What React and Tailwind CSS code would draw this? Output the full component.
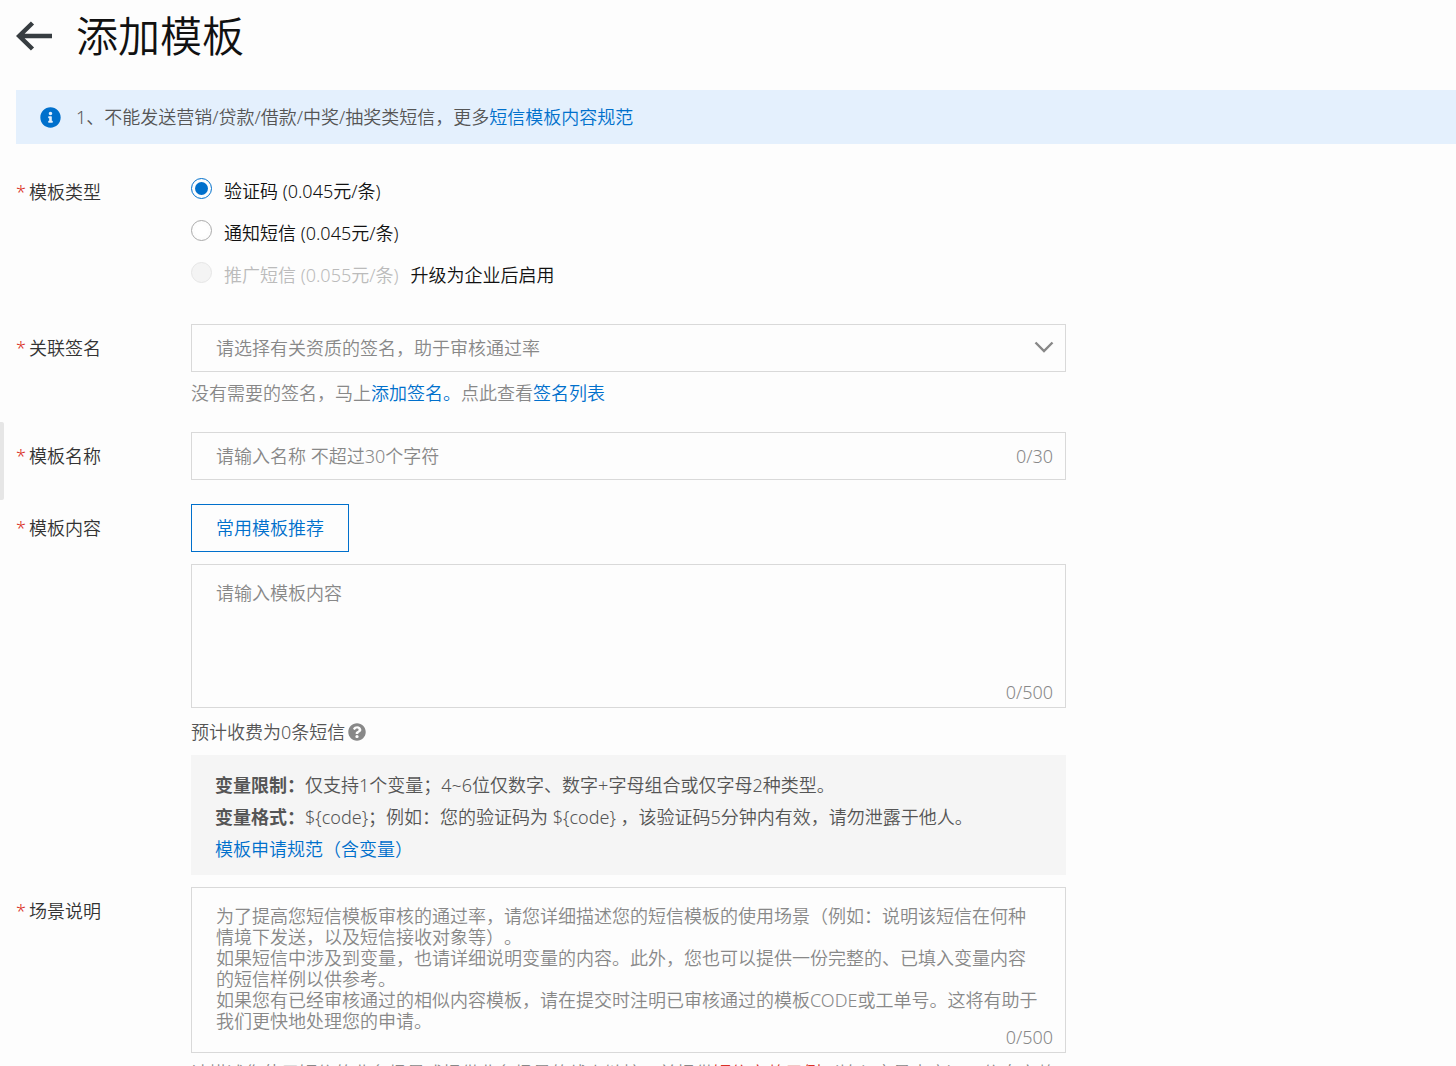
import { useState } from 'react'
import { FaInfoCircle, FaQuestionCircle } from 'react-icons/fa'

const PRICE_TYPES = [
  { value: 'code', label: '验证码 (0.045元/条)' },
  { value: 'notice', label: '通知短信 (0.045元/条)' },
  { value: 'promo', label: '推广短信 (0.055元/条)', disabled: true, note: '升级为企业后启用' },
]

const SCENE_PLACEHOLDER = [
  '为了提高您短信模板审核的通过率，请您详细描述您的短信模板的使用场景（例如：说明该短信在何种情境下发送，以及短信接收对象等）。',
  '如果短信中涉及到变量，也请详细说明变量的内容。此外，您也可以提供一份完整的、已填入变量内容的短信样例以供参考。',
  '如果您有已经审核通过的相似内容模板，请在提交时注明已审核通过的模板CODE或工单号。这将有助于我们更快地处理您的申请。',
].join('\n')

function FormRow({ label, htmlFor, id, children }) {
  const Label = htmlFor ? 'label' : 'div'
  return (
    <div className="grid grid-cols-6">
      <Label id={id} htmlFor={htmlFor} className="flex h-12 items-center gap-[3px] text-[#333]">
        <span className="text-[#d93026]">*</span>
        {label}
      </Label>
      <div className="col-span-5">{children}</div>
    </div>
  )
}

function TextLink({ children }) {
  return <a href="#" className="text-[#0070cc] hover:underline">{children}</a>
}

function CountedTextarea({ id, value, onChange, placeholder, max, className }) {
  return (
    <div className="relative border border-[#d9d9d9]">
      <textarea
        id={id}
        value={value}
        maxLength={max}
        placeholder={placeholder}
        onChange={(e) => onChange(e.target.value)}
        className={`block w-full resize-none overflow-hidden px-6 pt-[18px] leading-[21px] text-[#333] outline-none placeholder:text-[#888] ${className}`}
      />
      <span className="absolute right-3 bottom-[3px] text-[#888]">{value.length}/{max}</span>
    </div>
  )
}

export default function App() {
  const [type, setType] = useState('code')
  const [name, setName] = useState('')
  const [content, setContent] = useState('')
  const [scene, setScene] = useState('')

  return (
    <main className="relative min-h-screen bg-[#fdfdfd] pl-4 font-['Noto_Sans','Noto_Sans_CJK_SC',sans-serif] text-[18px] leading-6 font-[350] text-[#555] [text-spacing-trim:space-all]">
      <button
        type="button"
        aria-label="展开菜单"
        className="absolute top-[422px] left-0 h-[78px] w-1 rounded-r-xs bg-[#e6e6e6]"
      />

      <header className="flex h-[90px] items-start gap-6 pt-2">
        <button type="button" aria-label="返回" className="flex h-14 items-center">
          <svg width="36" height="30" viewBox="0 0 36 30" fill="none" stroke="#373d41" strokeWidth="4.5">
            <path d="M36 15H4M16.5 2 3.2 15l13.3 13" />
          </svg>
        </button>
        <h1 className="text-[42px] leading-14 font-[350] text-[#111]">添加模板</h1>
      </header>

      <div className="flex h-[54px] items-center gap-[15px] bg-[#e4f0fd] px-6">
        <FaInfoCircle className="size-[21px] text-[#0070cc]" />
        <p>
          1、不能发送营销/贷款/借款/中奖/抽奖类短信，更多<TextLink>短信模板内容规范</TextLink>
        </p>
      </div>

      <form className="w-full max-w-[1050px] pt-6" onSubmit={(e) => e.preventDefault()}>
        <FormRow label="模板类型" id="type-label">
          <div role="radiogroup" aria-labelledby="type-label" className="mb-7 pt-0.5">
            {PRICE_TYPES.map((item) => (
              <div key={item.value} className="flex h-[42px] items-center gap-3 text-[#111]">
                <label className={`flex items-center gap-3 ${item.disabled ? 'text-[#bbb]' : ''}`}>
                  <input
                    type="radio"
                    name="type"
                    value={item.value}
                    disabled={item.disabled}
                    checked={type === item.value}
                    onChange={() => setType(item.value)}
                    className="mb-[5px] size-[21px] appearance-none rounded-full border border-[#aaa] bg-white bg-clip-content p-[3px] checked:border-[#0070cc] checked:bg-[#0070cc] disabled:border-[#e6e6e6] disabled:bg-[#f4f4f4] disabled:bg-clip-border"
                  />
                  {item.label}
                </label>
                {item.note}
              </div>
            ))}
          </div>
        </FormRow>

        <FormRow label="关联签名" htmlFor="sign">
          <div className="relative">
            <select
              id="sign"
              defaultValue=""
              className="block h-12 w-full appearance-none border border-[#d9d9d9] px-6 text-[#888] outline-none"
            >
              <option value="" disabled>请选择有关资质的签名，助于审核通过率</option>
            </select>
            <svg
              className="pointer-events-none absolute top-4 right-3"
              width="20"
              height="14"
              viewBox="0 0 20 14"
              fill="none"
              stroke="#888"
              strokeWidth="2.4"
            >
              <path d="m1.5 2.5 8.5 8.5 8.5-8.5" />
            </svg>
          </div>
          <p className="mt-[9px] mb-[27px] text-[#888]">
            没有需要的签名，马上<TextLink>添加签名。</TextLink>点此查看<TextLink>签名列表</TextLink>
          </p>
        </FormRow>

        <FormRow label="模板名称" htmlFor="name">
          <div className="mb-6 flex h-12 items-center border border-[#d9d9d9] pr-3 pl-6">
            <input
              id="name"
              type="text"
              value={name}
              maxLength={30}
              placeholder="请输入名称 不超过30个字符"
              onChange={(e) => setName(e.target.value)}
              className="min-w-0 flex-1 text-[#333] outline-none placeholder:text-[#888]"
            />
            <span className="text-[#888]">{name.length}/30</span>
          </div>
        </FormRow>

        <FormRow label="模板内容" htmlFor="content">
          <button type="button" className="mb-3 block h-12 border border-[#0070cc] px-6 text-[#0070cc]">
            常用模板推荐
          </button>
          <CountedTextarea
            id="content"
            value={content}
            onChange={setContent}
            placeholder="请输入模板内容"
            max={500}
            className="h-[142px]"
          />
          <p className="mt-3 mb-[11px] flex items-center gap-[3px]">
            预计收费为0条短信
            <FaQuestionCircle className="size-[18px] text-[#888]" />
          </p>
          <div className="mb-3 bg-[#f5f5f5] px-6 pt-3.5 pb-2.5 leading-8">
            <p><strong className="font-bold">变量限制：</strong>仅支持1个变量；4~6位仅数字、数字+字母组合或仅字母2种类型。</p>
            <p>
              <strong className="font-bold">变量格式：</strong>
              {'${code}；例如：您的验证码为 ${code} ，该验证码5分钟内有效，请勿泄露于他人。'}
            </p>
            <p><TextLink>模板申请规范（含变量）</TextLink></p>
          </div>
        </FormRow>

        <FormRow label="场景说明" htmlFor="scene">
          <CountedTextarea
            id="scene"
            value={scene}
            onChange={setScene}
            placeholder={SCENE_PLACEHOLDER}
            max={500}
            className="h-[164px]"
          />
          <p className="mt-2 text-[#888]">
            请描述您使用短信的业务场景或提供业务场景的线上链接，并提供<span className="text-[#d93026]">短信完整示例</span>（填入变量内容），信息完整有助于提高模板审核通过率。
          </p>
        </FormRow>
      </form>
    </main>
  )
}
